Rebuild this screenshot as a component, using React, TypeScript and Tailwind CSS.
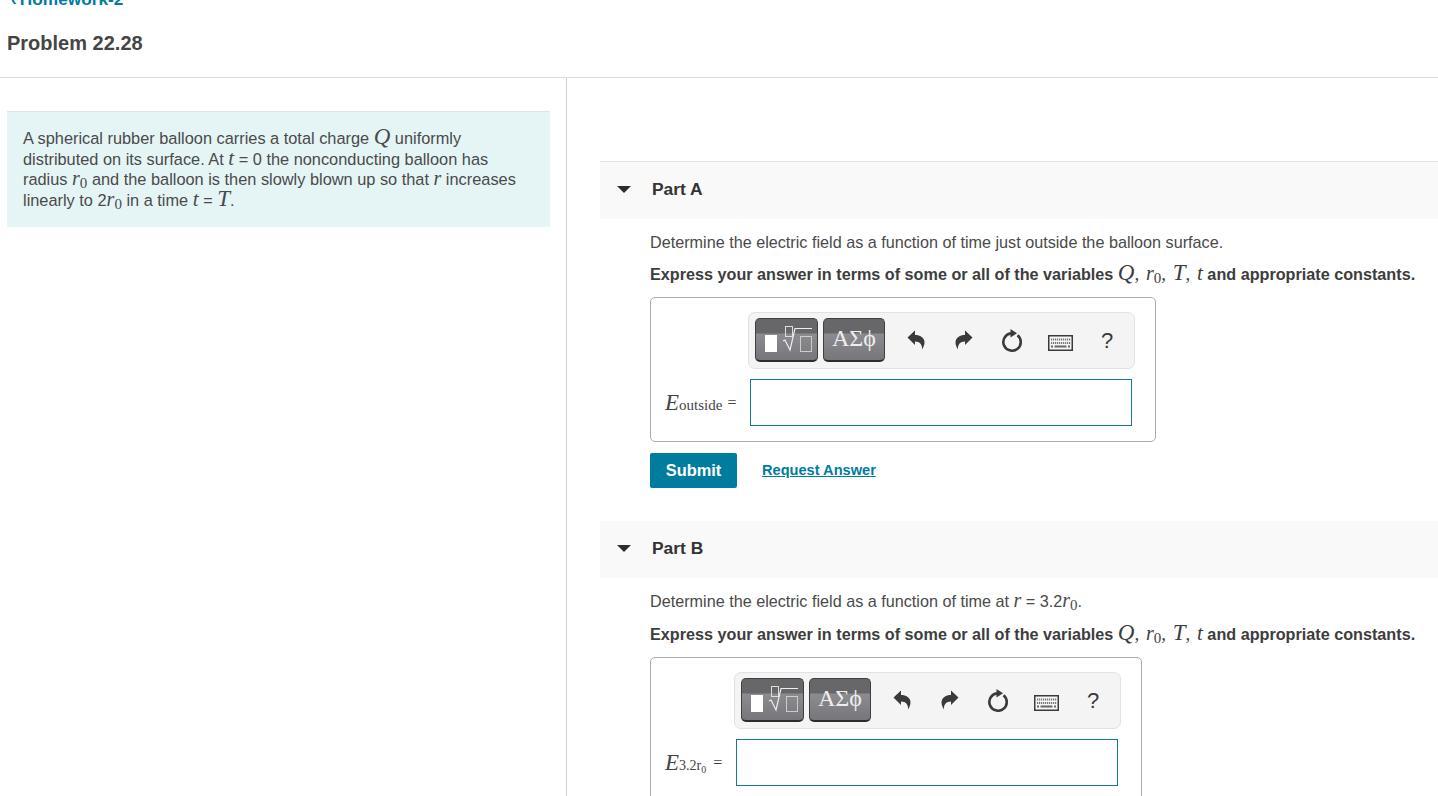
import React from "react";

const serif = "font-['Liberation_Serif',serif]";

function V({ children, size = "text-[23px]" }: { children: React.ReactNode; size?: string }) {
    return <span className={`font-['Liberation_Serif',serif] italic font-normal leading-[0] ${size}`}>{children}</span>
}

// r with a subscript zero
function R0() {
    return (
        <span className="font-['Liberation_Serif',serif] font-normal leading-[0]">
            <span className="italic text-[20px]">r</span>
            <span className="text-[15px] relative top-[3px]">0</span>
        </span>
    )
}

function Comma() {
    return <span className={`${serif} font-normal text-[19px] leading-[0] mr-[2px]`}>, </span>
}

function TemplateIcon() {
    return (
        <svg width="61" height="41" viewBox="0 0 61 41" fill="none">
            <rect x="9" y="16" width="12" height="17" fill="#fff" />
            <rect x="29.5" y="7.5" width="7" height="10" stroke="#ddd" strokeWidth="1" />
            <path d="M27 22 L29 21 L34 31 L39 9.5 H56" stroke="#eee" strokeWidth="1.2" />
            <rect x="44.5" y="17.5" width="11" height="15" stroke="#ccc" strokeWidth="1" />
        </svg>
    )
}

function UndoIcon({ flip = false }: { flip?: boolean }) {
    return (
        <svg width="18" height="20" viewBox="0 0 18 20" className={flip ? "-scale-x-100" : ""}>
            <path d="M0.5 7.5 L8 0.5 V5 C13 5 17.5 7.5 17.5 12.5 C17.5 15 16.5 17 15 19.5 C15.5 15 13 11.5 8 11.5 V15 Z" fill="#3a3a3a" />
        </svg>
    )
}

function ReloadIcon() {
    return (
        <svg width="22" height="24" viewBox="0 0 22 24" fill="none">
            <path d="M16.5 7.2 A8.7 8.7 0 1 1 10 5.35" stroke="#3a3a3a" strokeWidth="2.6" />
            <path d="M9.5 1 L16 5.3 L9.5 9.5 Z" fill="#3a3a3a" />
        </svg>
    )
}

function KeyboardIcon() {
    const top = [3, 5, 7, 9, 11, 13, 15, 17, 19, 21]
    return (
        <svg width="25" height="16" viewBox="0 0 25 16" fill="none">
            <rect x="0.75" y="0.75" width="23.5" height="14.5" stroke="#3a3a3a" strokeWidth="1.5" fill="#f6f6f6" />
            {top.map((x) => <rect key={x} x={x} y="3.5" width="1.2" height="2" fill="#777" />)}
            {top.map((x) => <rect key={x} x={x} y="7" width="1.2" height="2" fill="#777" />)}
            <rect x="3" y="10.5" width="2" height="2" fill="#666" />
            <rect x="6.5" y="10.5" width="12" height="2" fill="#666" />
            <rect x="20" y="10.5" width="2" height="2" fill="#666" />
        </svg>
    )
}

function ToolBtn({ children, w }: { children: React.ReactNode; w: string }) {
    return (
        <div className={`${w} h-[44px] rounded-[5px] border border-[#3f3f3f] border-b-2 border-b-[#2c2c2c] bg-[linear-gradient(#67676a_0,#67676a_14px,#8b8b90_15px,#77777b_100%)] flex items-center justify-center`}>
            {children}
        </div>
    )
}

function AnswerBox({ boxClass, toolbarClass, labelClass, label }: { boxClass: string; toolbarClass: string; labelClass: string; label: React.ReactNode }) {
    return (
        <div className={`${boxClass} border border-[#ababab] rounded-[5px] pt-[14px]`}>
            <div className={`${toolbarClass} w-[387px] h-[57px] bg-[#f4f4f4] border border-[#e2e2e2] rounded-[7px] flex items-center pl-[6px] pb-[1px]`}>
                <div className="flex gap-[5px]">
                    <ToolBtn w="w-[63px]"><TemplateIcon /></ToolBtn>
                    <ToolBtn w="w-[62px]">
                        <span className={`${serif} text-[#eeeeee] text-[24px] leading-[24px] mb-[3px]`}>ΑΣϕ</span>
                    </ToolBtn>
                </div>
                <div className="flex items-center ml-[7px]">
                    <div className="w-[48px] flex justify-center"><UndoIcon /></div>
                    <div className="w-[48px] flex justify-center"><UndoIcon flip /></div>
                    <div className="w-[48px] flex justify-center"><ReloadIcon /></div>
                    <div className="w-[48px] flex justify-center items-center pt-[5px]"><KeyboardIcon /></div>
                    <div className="w-[46px] flex justify-center items-center text-[22px] text-[#3a3a3a]">?</div>
                </div>
            </div>
            <div className="flex items-center mt-[10px] pb-[15px]">
                <div className={`${labelClass} pl-[14px] flex items-center text-[#444] whitespace-nowrap`}>{label}</div>
                <div className="w-[382px] h-[47px] border border-[#0f7a99] bg-white shrink-0"></div>
            </div>
        </div>
    )
}

function PartHeader({ title }: { title: string }) {
    return (
        <div className="h-[57px] bg-[#f9f9f9] flex items-center pb-[2px]">
            <div className="ml-[17px] w-0 h-0 border-l-[7px] border-r-[7px] border-t-[7px] border-l-transparent border-r-transparent border-t-[#2d2d2d]"></div>
            <span className="ml-[21px] font-bold text-[17.4px] text-[#333]">{title}</span>
        </div>
    )
}

function ExpressLine() {
    return (
        <p className="h-[20px] font-bold text-[16.2px] leading-[20px] text-[#3d3d3d] whitespace-nowrap">
            Express your answer in terms of some or all of the variables <V>Q</V><Comma /><R0 /><Comma /><V>T</V><Comma /><V size="text-[21px]">t</V> and appropriate constants.
        </p>
    )
}

export default function App() {
    return (
        <div className="h-[796px] w-[1438px] overflow-hidden bg-white font-['Liberation_Sans',sans-serif] text-[#4d4d4d]">
            {/* header */}
            <div className="h-[78px] overflow-hidden border-b border-[#dedede] px-[7px]">
                <div className="-mt-[8px] pl-[4px] h-[14px] leading-[14px] font-bold text-[17.3px] text-[#007c9e] whitespace-nowrap"><span className="mr-[3px]">‹</span>Homework-2</div>
                <h1 className="mt-[25px] font-bold text-[20px] leading-[24px] text-[#454545]">Problem 22.28</h1>
            </div>

            <div className="flex h-[718px]">
                {/* left column */}
                <div className="w-[567px] shrink-0 border-r border-[#c5d3dc] pt-[33px] pl-[7px]">
                    <div className="w-[543px] h-[116px] bg-[#e5f5f6] border-t border-[#dde5e6] pl-[16px] pt-[16px] text-[16.35px] leading-[20.5px] text-[#4a4a4a]">
                        <div className="h-[20.5px] whitespace-nowrap">A spherical rubber balloon carries a total charge <V>Q</V> uniformly</div>
                        <div className="h-[20.5px] whitespace-nowrap">distributed on its surface. At <V size="text-[21px]">t</V> = 0 the nonconducting balloon has</div>
                        <div className="h-[20.5px] whitespace-nowrap">radius <R0 /> and the balloon is then slowly blown up so that <V size="text-[20px]">r</V> increases</div>
                        <div className="h-[20.5px] whitespace-nowrap">linearly to 2<R0 /> in a time <V size="text-[21px]">t</V> = <V>T</V>.</div>
                    </div>
                </div>

                {/* right column */}
                <div className="flex-1 pl-[33px] pt-[83px]">
                    <div className="border-t border-[#e3e3e3]">
                        <PartHeader title="Part A" />
                        <div className="pl-[50px]">
                            <p className="mt-[13px] h-[20px] text-[16.2px] leading-[20px] text-[#4a4a4a] whitespace-nowrap">Determine the electric field as a function of time just outside the balloon surface.</p>
                            <div className="mt-[12px]"><ExpressLine /></div>
                            <div className="mt-[13px]">
                                <AnswerBox
                                    boxClass="w-[506px]"
                                    toolbarClass="ml-[97px]"
                                    labelClass="w-[99px]"
                                    label={<><V>E</V><span className={`${serif} text-[15px] relative top-[3px]`}>outside</span><span className={`${serif} text-[16px] ml-[5px]`}>=</span></>}
                                />
                            </div>
                            <div className="mt-[11px] flex items-center">
                                <div className="w-[87px] h-[35px] rounded-[2px] bg-[#007c9e] text-white font-bold text-[16.4px] flex items-center justify-center">Submit</div>
                                <span className="ml-[25px] font-bold text-[14.6px] text-[#007c9e] underline">Request Answer</span>
                            </div>
                        </div>
                    </div>

                    <div className="mt-[33px]">
                        <PartHeader title="Part B" />
                        <div className="pl-[50px]">
                            <p className="mt-[13px] h-[20px] text-[16.2px] leading-[20px] text-[#4a4a4a] whitespace-nowrap">Determine the electric field as a function of time at <V size="text-[20px]">r</V> = 3.2<R0 />.</p>
                            <div className="mt-[13px]"><ExpressLine /></div>
                            <div className="mt-[13px]">
                                <AnswerBox
                                    boxClass="w-[492px]"
                                    toolbarClass="ml-[83px]"
                                    labelClass="w-[85px]"
                                    label={<><V>E</V><span className={`${serif} text-[14px] relative top-[3px]`}>3.2r<sub className="text-[10px]">0</sub></span><span className={`${serif} text-[16px] ml-[7px]`}>=</span></>}
                                />
                            </div>
                        </div>
                    </div>
                </div>
            </div>
        </div>
    )
}
